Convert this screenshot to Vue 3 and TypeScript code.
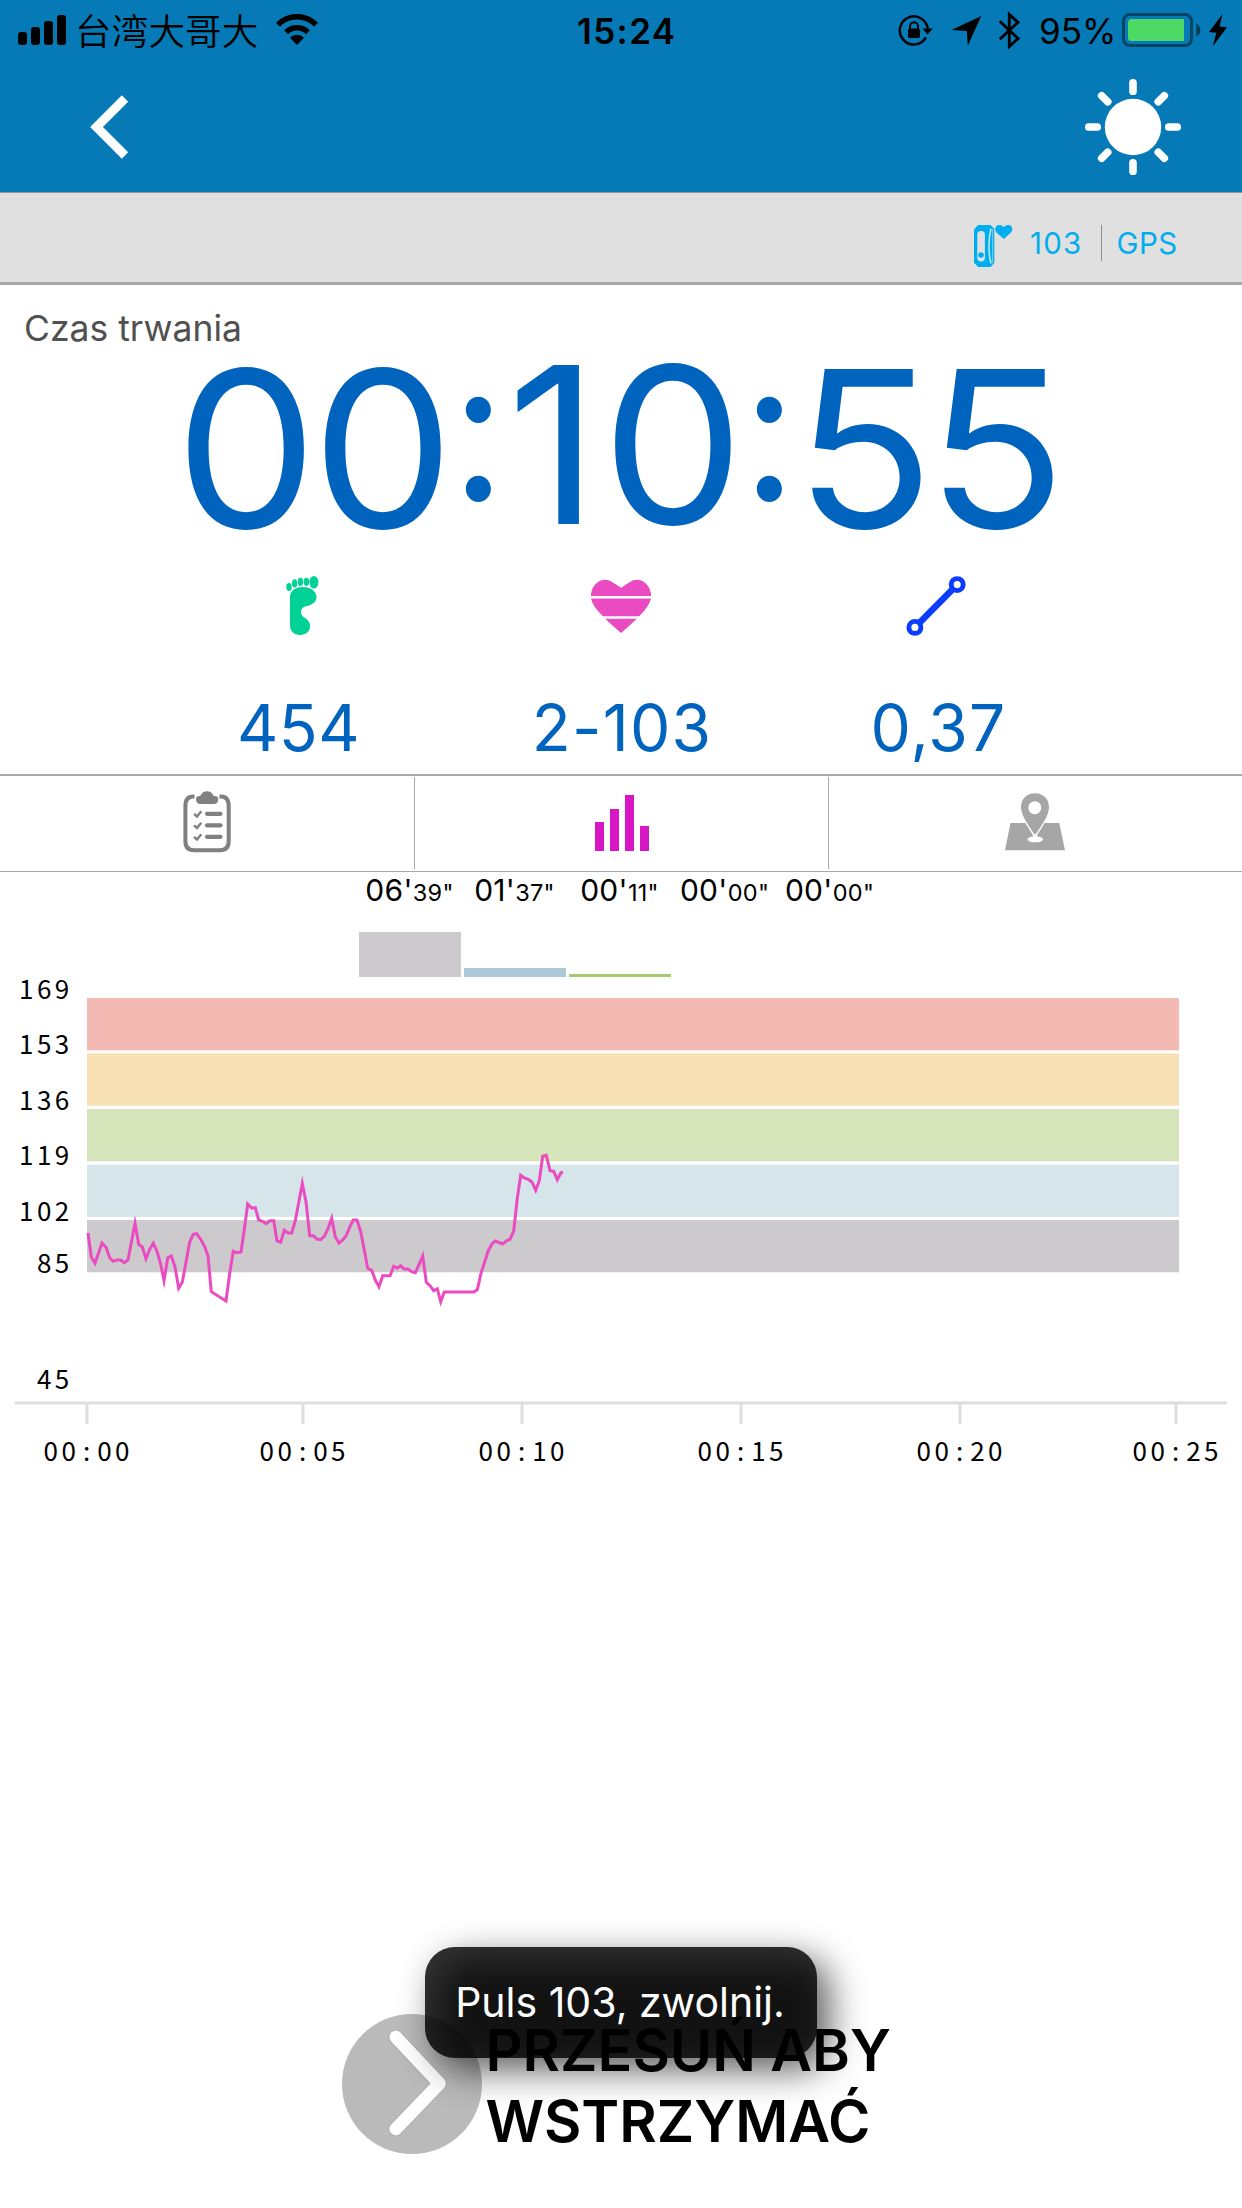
<script setup lang="ts">
interface Zone { time: [string, string]; height: number; color: string }
interface Band { y: number; color: string }

const timer: { text: string; cls: string }[] = [
  { text: '00', cls: 'hours' },
  { text: ':', cls: 'colon' },
  { text: '10', cls: 'minutes' },
  { text: ':', cls: 'colon' },
  { text: '55', cls: 'seconds' },
]

const zones: Zone[] = [
  { time: ['06', '39'], height: 45, color: '#cdcace' },
  { time: ['01', '37'], height: 9, color: '#adc8d6' },
  { time: ['00', '11'], height: 3, color: '#abc971' },
  { time: ['00', '00'], height: 0, color: '#f0c36d' },
  { time: ['00', '00'], height: 0, color: '#e77469' },
]

const bands: Band[] = [
  { y: 18, color: '#f3b9b3' },
  { y: 73.4, color: '#f8e0b5' },
  { y: 129, color: '#d5e4b9' },
  { y: 184.6, color: '#d6e5ea' },
  { y: 240, color: '#cdcace' },
]

const levels: { label: string; y: number }[] = [
  { label: '169', y: 19 },
  { label: '153', y: 74 },
  { label: '136', y: 130 },
  { label: '119', y: 185 },
  { label: '102', y: 241 },
  { label: '85', y: 293 },
  { label: '45', y: 409 },
]

const ticks: { label: string; x: number }[] = [
  { label: '00:00', x: 87 },
  { label: '00:05', x: 303 },
  { label: '00:10', x: 522 },
  { label: '00:15', x: 741 },
  { label: '00:20', x: 960 },
  { label: '00:25', x: 1176 },
]

// Axis labels are set on a fixed character pitch.
const PITCH = 17.9
const levelX = (s: string) => s.split('').map((_, i) => 62 - (s.length - 1 - i) * PITCH).join(' ')
const tickX = (s: string, x: number) => s.split('').map((_, i) => x + (i - 2) * PITCH - 0.5).join(' ')

// Heart-rate samples as x,y pairs inside the chart.
const pulse =
  '88,253 91.3,277 95,283.3 102,263 106,267.3 109.7,277.7 113,281.3 116.7,280 120.7,280 124.3,282.7 128,280 135,243.3 138.7,264.3 142.3,267 146,278.7 149.7,269.3 153.3,263.3 157,271.3 160.7,284.3 164,300.7 167.7,278 171.3,276 175,286.7 178.7,308.3 182.3,302.3 189.7,262 193.3,254.3 196.7,253.7 200.7,259.3 204.7,266.7 208,276 211.3,311.7 226,321 229.7,293.3 233.3,271.3 237,272.7 241,272 244.7,246.7 247.7,224 251.7,228 255.3,227.7 258.7,240 262.3,241.3 266.3,243.7 270,240.7 273.7,240.7 277,261 280.7,262.3 284.3,250.3 288,253 291.7,253 295.3,240.7 302.3,203.3 306,221.7 309.7,255.7 313.3,255.7 317,259 320.7,259.7 324.3,256.3 328,248.7 331.7,238.3 335.3,257 339,263 342.7,260 346,256 350,246.7 353.3,240 357,240 360.7,251.7 364.3,270 367.7,288.3 371.7,290.3 375.3,300 379,306.7 382.7,295.7 390,295.7 393.7,286.3 397.3,288 400.7,285.7 404,289 408,289 411.7,291.7 415.3,292.7 419,284.7 422.7,276 426.3,302.3 430,305.7 433.7,310.7 437.3,308.7 440.7,321.7 444.3,312 473.7,312 477.3,309.7 481,293.3 488.3,270.7 492,264 495.3,261 502.7,264 506.3,261 510,259.3 513.7,251 517.3,218.3 520.7,195.3 524.3,198 528.7,199.7 532,202 535.7,210.3 539.3,200.7 542.7,176.3 546.3,175.3 550,190.7 553.7,191.3 557.3,199.7 561,192.7 563,192.3'

const rays = [0, 45, 90, 135, 180, 225, 270, 315]
</script>

<template>
  <div class="screen">
    <div class="status">
      <svg class="signal" width="50" height="32" viewBox="0 0 50 32">
        <rect x="0" y="18" width="9" height="13" rx="3" />
        <rect x="13" y="13" width="9" height="18" rx="3" />
        <rect x="26" y="7" width="9" height="24" rx="3" />
        <rect x="39" y="1" width="9" height="30" rx="3" />
      </svg>
      <span class="carrier">台湾大哥大</span>
      <svg class="wifi" width="44" height="32" viewBox="0 0 44 32">
        <path d="M22 31 L15 23.7 A10 10 0 0 1 29 23.7 Z" />
        <path d="M11 18.3 A15.7 15.7 0 0 1 33 18.3" fill="none" stroke="#000" stroke-width="5.6" />
        <path d="M3 10.7 A26.5 26.5 0 0 1 41 10.7" fill="none" stroke="#000" stroke-width="5.6" />
      </svg>
      <span class="clock">15:24</span>
      <svg class="sysicons" width="124" height="40" viewBox="898 10 124 40">
        <path d="M926 37.3 A14 14 0 1 1 927.8 30" fill="none" stroke="#000" stroke-width="2.4" />
        <path d="M922.5 28.5 H932.8 L927.6 34.6 Z" />
        <rect x="908" y="28.5" width="12" height="9.5" rx="1.6" />
        <path d="M910 29 V26.5 a4 4.2 0 0 1 8 0 V29" fill="none" stroke="#000" stroke-width="2" />
        <path d="M951.5 30 L981.2 16 L967.8 45.8 L966.8 31 Z" />
        <path d="M999.8 21.3 L1018 38.5 L1009.3 46.5 V14.5 L1018 22.3 L999.8 39.2" fill="none" stroke="#000" stroke-width="2.9" />
      </svg>
      <span class="percent">95%</span>
      <svg class="battery" width="106" height="36" viewBox="1122 12 106 36">
        <rect x="1123.5" y="14.5" width="68" height="31" rx="6.5" fill="none" stroke="#000" stroke-opacity=".45" stroke-width="3" />
        <path d="M1196.3 23.5 a8 7.5 0 0 1 0 13 z" fill-opacity=".5" />
        <path d="M1184 19 H1131.5 a3.5 3.5 0 0 0 -3.5 3.5 V37.5 a3.5 3.5 0 0 0 3.5 3.5 H1184 Z" fill="#4cd964" />
        <path d="M1222.5 14 L1209 32 L1216.3 32.8 L1212.8 46.3 L1227 27.2 L1219.5 26.4 Z" />
      </svg>
    </div>

    <header class="nav">
      <svg width="40" height="68" viewBox="0 0 40 68">
        <path d="M36 5.5 L7.5 34 L36 62.5" fill="none" stroke="#fff" stroke-width="9" />
      </svg>
      <svg width="98" height="98" viewBox="-49 -49 98 98">
        <circle r="28.2" fill="#fff" />
        <rect v-for="a in rays" :key="a" x="-3.8" y="-48" width="7.6" height="16" rx="3.6" fill="#fff" :transform="`rotate(${a})`" />
      </svg>
    </header>

    <div class="sensors">
      <svg width="40" height="44" viewBox="973 224 40 44">
        <path d="M978 225 H990.5 L994.3 229 V263 L990.5 267 H978 L974 262.5 V229.5 Z" fill="#00adee" />
        <rect x="977.3" y="231" width="7.6" height="30.4" rx="3.6" fill="#e0e0e0" />
        <circle cx="981" cy="255" r="2.8" fill="#00adee" />
        <path d="M991 228.5 Q986.8 246 991 263.5" fill="none" stroke="#bfe2ee" stroke-width="1.6" />
        <path d="M992.6 229 V263" stroke="#7fcdea" stroke-width="1" />
        <path d="M1003.8 239 L996.5 232.6 C994 229.5 995.4 225 999.4 225 C1001.6 225 1003 226 1003.8 227.4 C1004.6 226 1006 225 1008.2 225 C1012.4 225 1013.4 229.5 1011 232.6 Z" fill="#00adee" />
      </svg>
      <span class="hr">103</span>
      <i class="sep"></i>
      <span class="gps">GPS</span>
    </div>

    <section class="summary">
      <div class="caption"><span>Czas trwania</span></div>
      <div class="timer">
        <span v-for="(p, i) in timer" :key="i" :class="p.cls">{{ p.text }}</span>
      </div>
      <div class="stats">
        <div class="stat steps">
          <svg width="34" height="62" viewBox="285 575 34 62" fill="#00d196">
            <ellipse cx="289" cy="587" rx="2.7" ry="4" />
            <ellipse cx="294.6" cy="583.4" rx="2.6" ry="4.1" />
            <ellipse cx="300.4" cy="581.9" rx="2.7" ry="4.1" />
            <ellipse cx="306.4" cy="581.8" rx="2.8" ry="4.1" />
            <ellipse cx="313.9" cy="582.3" rx="4.5" ry="6.3" />
            <path d="M290 596 C291 590 296 587 303 587 C311 587 316.5 591.5 316.5 597 C316.5 602 312 605.5 305 606.5 C300.5 608 299.5 613.5 303.5 617 C308 620 310 622 310 626 C310 631.5 306 635 300 635 C294 635 290 631 290 625 Z" />
          </svg>
          <span>454</span>
        </div>
        <div class="stat pulse">
          <svg width="62" height="62" viewBox="590 575 62 62">
            <path d="M621 633 C612 625 604 618 598 611 C592 604 590.5 599 591 594 C592 588 594 585 598 582 C603 578.5 608 579.5 612 582 C616 584.5 618.5 586 621 588 C623.5 586 626 584.5 630 582 C634 579.5 639 578.5 644 582 C648 585 650 588 651 594 C651.5 599 650 604 644 611 C638 618 630 625 621 633 Z" fill="#eb4bc0" />
            <path d="M590 597.3 H652 M600 617.5 H642" stroke="#fff" stroke-width="2.4" />
          </svg>
          <span>2-103</span>
        </div>
        <div class="stat distance">
          <svg width="62" height="62" viewBox="905 575 62 62" fill="none" stroke="#0b3cff">
            <circle cx="957.2" cy="584.6" r="6" stroke-width="4.9" />
            <circle cx="914.9" cy="627.4" r="6" stroke-width="4.9" />
            <path d="M919.5 622.8 L952.6 589.2" stroke-width="6.6" />
          </svg>
          <span>0,37</span>
        </div>
      </div>
    </section>

    <nav class="tabs">
      <div class="tab">
        <svg width="50" height="64" viewBox="182 790 50 64" fill="none" stroke="#808080">
          <path d="M194.5 796.5 H193 Q185.4 796.5 185.4 806 V841 Q185.4 850.3 194 850.3 H220 Q228.7 850.3 228.7 841 V806 Q228.7 796.5 221 796.5 H219.5" stroke-width="4" />
          <path d="M196 799 Q196 796 199.5 796 C201.5 796 201 791.2 207 791.2 C213 791.2 212.5 796 214.5 796 Q218.3 796 218.3 799 Q218.3 804 213.5 804 H200.5 Q196 804 196 799 Z" fill="#808080" stroke="none" />
          <g v-for="y in [813.8, 825.3, 836.8]" :key="y">
            <path :d="`M207 ${y} H220.5`" stroke-width="4.2" stroke-linecap="round" />
            <path :d="`M194 ${y} l3 2.7 l4.3 -5.2`" stroke-width="2.4" />
          </g>
        </svg>
      </div>
      <div class="tab chart-tab">
        <svg width="54" height="56" viewBox="595 795 54 56" fill="#d816c4">
          <rect x="595" y="822" width="9" height="29" />
          <rect x="610" y="809" width="9" height="42" />
          <rect x="625" y="795" width="9" height="56" />
          <rect x="640" y="826" width="9" height="25" />
        </svg>
      </div>
      <div class="tab map-tab">
        <svg width="60" height="58" viewBox="1005 793 60 58">
          <path d="M1010.5 823 H1059.3 L1065 850.3 H1005 Z" fill="#a6a6a6" />
          <path d="M1035 836 C1031 828 1021 817 1021 807 C1021 798.5 1027 793.2 1035 793.2 C1043 793.2 1049 798.5 1049 807 C1049 817 1039 828 1035 836 Z" fill="#a6a6a6" stroke="#fff" stroke-width="3" paint-order="stroke" />
          <ellipse cx="1035.3" cy="839.3" rx="7.8" ry="3" fill="#fff" />
          <path d="M1032.5 838 L1035 833 L1037.5 838 Z" fill="#fff" />
          <circle cx="1034.8" cy="807.7" r="6.5" fill="#fff" />
        </svg>
      </div>
    </nav>

    <section class="zones">
      <div v-for="(z, i) in zones" :key="i" class="zone">
        <div class="ztime"><span>{{ z.time[0] }}'</span><small>{{ z.time[1] }}"</small></div>
        <div class="zbar" :style="{ height: z.height + 'px', background: z.color }"></div>
      </div>
    </section>

    <svg class="chart" width="1242" height="500" viewBox="0 0 1242 500">
      <rect v-for="b in bands" :key="b.y" x="87" :y="b.y" width="1092" height="52.3" :fill="b.color" />
      <polyline :points="pulse" fill="none" stroke="#eb4bc0" stroke-width="3" stroke-miterlimit="8" />
      <path d="M15 423 H1227" stroke="#dedede" stroke-width="3" />
      <g v-for="t in ticks" :key="t.label">
        <path :d="`M${t.x} 424 V444`" stroke="#dedede" stroke-width="3" />
        <text :x="tickX(t.label, t.x)" y="481">{{ t.label }}</text>
      </g>
      <text v-for="l in levels" :key="l.label" :x="levelX(l.label)" :y="l.y">{{ l.label }}</text>
    </svg>

    <footer class="slider">
      <svg width="140" height="140" viewBox="0 0 140 140">
        <circle cx="70" cy="70" r="70" fill="#bababa" />
        <path d="M53.8 23 L97.5 69.5 L53.8 115" fill="none" stroke="#a8a8a8" stroke-width="14.6" stroke-linecap="round" stroke-linejoin="round" />
        <path d="M53.8 23 L97.5 69.5 L53.8 115" fill="none" stroke="#fff" stroke-width="12.8" stroke-linecap="round" stroke-linejoin="round" />
      </svg>
      <p>PRZESUŃ ABY<br />WSTRZYMAĆ</p>
    </footer>

    <div class="toast"><span>Puls 103, zwolnij.</span></div>
  </div>
</template>

<style>
html, body { background: #fff; }
</style>

<style scoped>
.screen {
  position: relative;
  width: 1242px;
  height: 2208px;
  overflow: hidden;
  background: #fff;
  font-family: Inter, "Liberation Sans", sans-serif;
  display: flex;
  flex-direction: column;
}
.screen > * { flex: none; }
svg { display: block; flex: none; }
span, small { white-space: nowrap; }

.status {
  height: 60px;
  background: #067ab6;
  display: flex;
  align-items: flex-start;
  color: #000;
}
.signal { margin: 14px 0 0 18px; }
.carrier {
  margin-left: 7px;
  width: 200px;
  font: 350 36.5px/60px "Noto Sans CJK TC", sans-serif;
  letter-spacing: .2px;
}
.wifi { margin-top: 14px; }
.clock {
  width: 100px;
  margin-left: 258px;
  font-size: 35px;
  font-weight: 600;
  line-height: 62px;
  letter-spacing: 1.4px;
}
.sysicons { margin: 10px 0 0 221px; }
.percent { width: 83px; margin-left: 17px; font-size: 35px; line-height: 62px; }
.battery { margin-top: 12px; }

.nav {
  box-sizing: border-box;
  height: 133px;
  background: #067ab6;
  border-bottom: 1px solid #979797;
  display: flex;
  justify-content: space-between;
  padding: 1px 60px 0 89px;
  align-items: center;
}
.sensors {
  box-sizing: border-box;
  height: 92px;
  background: #e0e0e0;
  border-bottom: 3px solid #a9a9a9;
  display: flex;
  align-items: flex-start;
  padding: 31px 0 0 973px;
  color: #00adee;
  font-size: 29.5px;
  line-height: 39px;
}
.hr { margin-left: 17px; width: 71px; letter-spacing: 1.2px; }
.sep { width: 1px; height: 36px; background: #8e8e8e; margin-top: 1px; }
.gps { margin-left: 14.5px; letter-spacing: .4px; }

.summary { height: 489px; border-bottom: 2px solid #a9a9a9; }
.caption {
  box-sizing: border-box;
  height: 77px;
  padding-left: 24px;
  font-size: 35.5px;
  line-height: 88px;
  color: #505050;
}
.timer {
  height: 187px;
  display: flex;
  color: #0063be;
  font-size: 219px;
  line-height: 174px;
  padding-left: 174.8px;
}
.timer span { flex: none; transform-origin: 0 0; }
.hours { width: 276.3px; letter-spacing: -5.5px; transform: scaleX(1.03); }
.minutes { width: 234.6px; letter-spacing: 2.8px; transform: translateY(-4px) scaleX(1.03); }
.seconds { letter-spacing: -7.3px; transform: translateX(-3.5px) scaleX(1.05); }
.timer .colon { width: 56.4px; font-size: 200px; transform: translateY(-21.5px) scaleX(.95); }

.stats { display: flex; height: 214px; padding-left: 142px; }
.stat {
  display: flex;
  flex-direction: column;
  align-items: center;
  color: #0063be;
  font-size: 64px;
  line-height: 70px;
  padding-top: 26px;
}
.stat svg { margin-bottom: 55.5px; }
.steps { width: 318px; }
.steps svg { margin-left: 2px; }
.steps span { margin-right: 5px; letter-spacing: .5px; }
.pulse { width: 324px; }
.pulse svg { margin-right: 3px; }
.pulse span { letter-spacing: 1.2px; }
.distance { width: 306px; }
.distance span { margin-left: 3px; letter-spacing: 1.2px; }
.distance svg { margin-right: 3px; }

.tabs {
  height: 94px;
  display: flex;
  border-bottom: 1px solid #a9a9a9;
  padding-top: 1px;
}
.tab {
  box-sizing: border-box;
  width: 414px;
  height: 92px;
  display: flex;
  justify-content: center;
  padding-top: 13px;
  border-right: 1px solid #a9a9a9;
}
.tab:first-child { width: 415px; }
.tab:last-child { width: 413px; border-right: 0; }
.chart-tab { padding-top: 18px; }
.map-tab { padding-top: 16px; padding-right: 1px; }

.zones { display: flex; height: 105px; padding-left: 359px; gap: 3px; }
.zone { width: 102px; display: flex; flex-direction: column; justify-content: space-between; align-items: center; }
.ztime { font-size: 30px; line-height: 36px; display: flex; align-items: baseline; margin-left: -1px; letter-spacing: .3px; }
.ztime small { font-size: 23.5px; letter-spacing: .3px; }
.zbar { width: 102px; }

.chart { margin-top: 3px; }
.chart text {
  font-family: "Noto Sans CJK SC", "Noto Sans", sans-serif;
  font-size: 26px;
  text-anchor: middle;
  fill: #000;
}

.slider {
  position: absolute;
  left: 342px;
  top: 2014px;
  display: flex;
  gap: 3.5px;
}
.slider p {
  margin: 1px 0 0;
  font-size: 57.5px;
  font-weight: 600;
  line-height: 71px;
  color: #000;
}
.toast {
  position: absolute;
  z-index: 1;
  left: 424.5px;
  top: 1947px;
  width: 392.5px;
  height: 110.5px;
  border-radius: 30px;
  background: rgba(0, 0, 0, .8);
  color: #fff;
  font-size: 41px;
  line-height: 110px;
  text-align: center;
}
.toast span { margin-right: 1.5px; }
.toast::before {
  content: "";
  position: absolute;
  inset: 0;
  z-index: -1;
  border-radius: 30px;
  background: rgba(0, 0, 0, .64);
  transform: translate(12px, 12px);
  filter: blur(18px);
}
</style>
